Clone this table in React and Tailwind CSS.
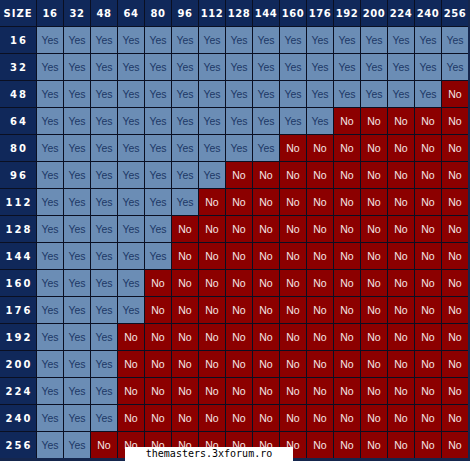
import React from "react";

const sizes = [16, 32, 48, 64, 80, 96, 112, 128, 144, 160, 176, 192, 200, 224, 240, 256];
const yesCounts = [16, 16, 15, 11, 9, 7, 6, 5, 5, 4, 4, 3, 3, 3, 3, 2];

function HeadCell({ children, className }) {
  return (
    <div
      className={
        "bg-[#10285a] text-white flex items-center justify-center text-[10px] font-bold font-['DejaVu_Sans',sans-serif] " +
        className
      }
    >
      {children}
    </div>
  );
}

export default function App() {
  return (
    <div className="relative w-[470px] h-[461px] bg-[#15264d] overflow-hidden">
      <div className="grid grid-cols-[36px_repeat(16,26px)] grid-rows-[repeat(17,26px)] gap-px bg-[#0a0f22] w-[468px] h-[458px]">
        <HeadCell className="tracking-[1px] text-[#e6ecf5]">SIZE</HeadCell>
        {sizes.map((s) => (
          <HeadCell key={"h" + s} className="tracking-[0.5px]">
            {s}
          </HeadCell>
        ))}
        {sizes.map((row, ri) => (
          <React.Fragment key={"r" + row}>
            <HeadCell className="tracking-[2px] pl-[2px]">{row}</HeadCell>
            {sizes.map((col, ci) =>
              ci < yesCounts[ri] ? (
                <div
                  key={"c" + col}
                  className="bg-[#6b8db5] text-[#1d3866] flex items-center justify-center pt-[2px] text-[10.5px] font-['Liberation_Sans',Arial,sans-serif]"
                >
                  Yes
                </div>
              ) : (
                <div
                  key={"c" + col}
                  className="bg-[#8c0000] text-[#f4e6e6] flex items-center justify-center pt-[1px] text-[10.5px] font-['Liberation_Sans',Arial,sans-serif]"
                >
                  No
                </div>
              )
            )}
          </React.Fragment>
        ))}
      </div>
      <div className="absolute left-[125px] top-[447px] w-[168px] h-[14px] bg-white text-black flex items-center justify-center text-[10px] leading-none font-['DejaVu_Sans_Mono',monospace]">
        themasters.3xforum.ro
      </div>
    </div>
  );
}
